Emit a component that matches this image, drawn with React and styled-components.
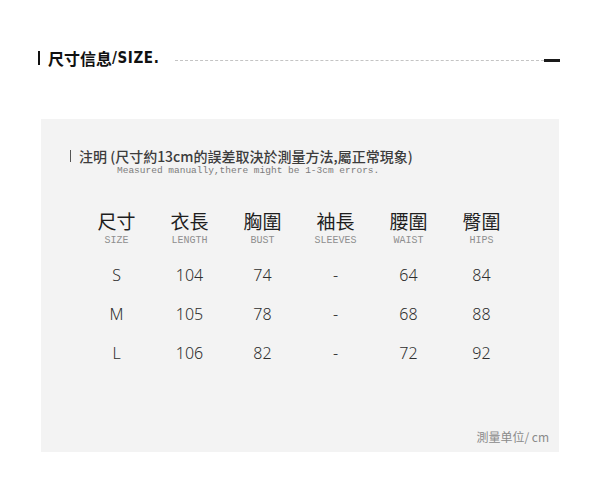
import React from "react";
import styled, { createGlobalStyle } from "styled-components";

const Global = createGlobalStyle`
  html, body { margin: 0; padding: 0; background: #fff; }
  body { width: 600px; height: 491px; overflow: hidden; font-family: "Noto Sans", "Noto Sans CJK SC", sans-serif; }
`;

const Page = styled.div`
  width: 600px;
  height: 491px;
  box-sizing: border-box;
  padding-top: 48px;
`;

const TitleRow = styled.div`
  display: flex;
  align-items: center;
  height: 20px;
  margin: 0 40px 0 38px;
`;

const Title = styled.div`
  display: flex;
  align-items: center;
  font-family: "Noto Sans CJK SC", sans-serif;
  font-weight: 700;
  font-size: 16px;
  line-height: 20px;
  color: #111;
  &::before {
    content: "";
    width: 2px;
    height: 14px;
    background: #111;
    margin-right: 8px;
  }
`;

const Latin = styled.span`
  font-family: "DejaVu Sans Condensed", "DejaVu Sans", sans-serif;
  font-weight: 700;
  font-size: 15px;
  letter-spacing: 0.6px;
`;

const Dashed = styled.div`
  flex: 1;
  margin: 4px 0 0 16px;
  border-top: 1px dashed #c4c4c4;
`;

const EndDash = styled.div`
  width: 16px;
  height: 3px;
  margin-top: 4px;
  background: #1a1a1a;
`;

const Panel = styled.div`
  margin: 51px 41px 0 41px;
  height: 333px;
  box-sizing: border-box;
  background: #f3f3f3;
  padding: 29px 10px 0 0;
  display: flex;
  flex-direction: column;
`;

const Note = styled.div`
  display: flex;
  align-items: center;
  padding-left: 29px;
  font-family: "Noto Sans CJK SC", sans-serif;
  font-weight: 500;
  font-size: 14px;
  line-height: 16px;
  color: #3c3c3c;
  white-space: nowrap;
  &::before {
    content: "";
    width: 1px;
    height: 12px;
    background: #555;
    margin-right: 8px;
  }
`;

const NoteSub = styled.div`
  margin-top: 1px;
  padding-left: 76px;
  font-family: "Liberation Mono", monospace;
  font-size: 9.5px;
  line-height: 12px;
  color: #7c7c7c;
  white-space: nowrap;
`;

const Table = styled.div`
  margin-top: 32px;
  padding-left: 39px;
  display: grid;
  grid-template-columns: repeat(6, 73px);
`;

const HeadCell = styled.div`
  display: flex;
  flex-direction: column;
  align-items: center;
`;

const HeadZh = styled.div`
  font-family: "Noto Sans CJK TC", "Noto Sans CJK SC", sans-serif;
  font-size: 19px;
  line-height: 24px;
  color: #1e1e1e;
`;

const HeadEn = styled.div`
  margin-top: 1px;
  font-family: "Liberation Mono", monospace;
  font-size: 10px;
  line-height: 14px;
  color: #8e8e8e;
  margin-bottom: 8px;
`;

const Cell = styled.div`
  text-align: center;
  font-family: "Noto Sans", sans-serif;
  font-weight: 300;
  font-size: 16px;
  line-height: 39px;
  color: #2e2e2e;
`;

const Footer = styled.div`
  margin-top: auto;
  margin-bottom: 7px;
  text-align: right;
  font-family: "Noto Sans CJK SC", sans-serif;
  font-size: 12px;
  line-height: 16px;
  color: #8a8a8a;
`;

const heads = [
  ["尺寸", "SIZE"],
  ["衣長", "LENGTH"],
  ["胸圍", "BUST"],
  ["袖長", "SLEEVES"],
  ["腰圍", "WAIST"],
  ["臀圍", "HIPS"],
];

const rows = [
  ["S", "104", "74", "-", "64", "84"],
  ["M", "105", "78", "-", "68", "88"],
  ["L", "106", "82", "-", "72", "92"],
];

export default function App() {
  return (
    <Page>
      <Global />
      <TitleRow>
        <Title>
          尺寸信息<Latin>/SIZE.</Latin>
        </Title>
        <Dashed />
        <EndDash />
      </TitleRow>
      <Panel>
        <Note>注明 (尺寸約13cm的誤差取決於測量方法,屬正常現象)</Note>
        <NoteSub>Measured manually,there might be 1-3cm errors.</NoteSub>
        <Table>
          {heads.map(([zh, en]) => (
            <HeadCell key={en}>
              <HeadZh>{zh}</HeadZh>
              <HeadEn>{en}</HeadEn>
            </HeadCell>
          ))}
          {rows.map((r) =>
            r.map((v, i) => <Cell key={r[0] + i}>{v}</Cell>)
          )}
        </Table>
        <Footer>測量单位/ cm</Footer>
      </Panel>
    </Page>
  );
}
